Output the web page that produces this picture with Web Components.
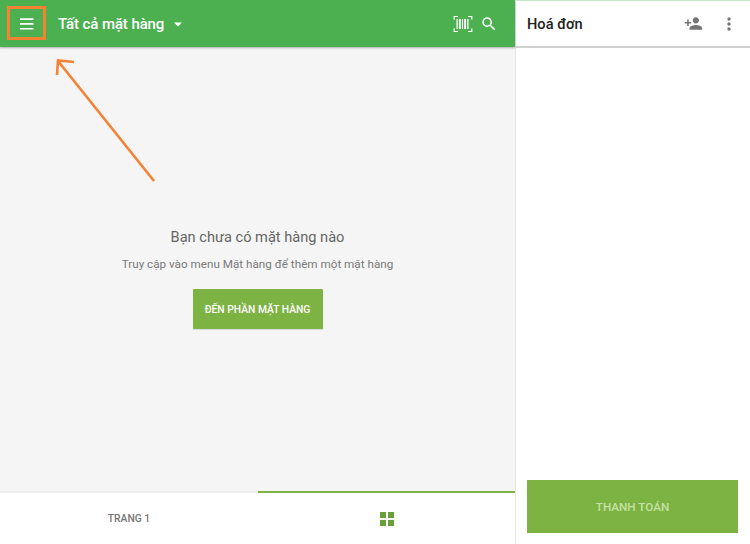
<!DOCTYPE html>
<html lang="vi">
<head>
<meta charset="utf-8">
<title>Bán hàng</title>
<style>
  html, body { margin: 0; height: 100%; }
  body { font-family: Roboto, "Liberation Sans", sans-serif; overflow: hidden; background: #fff; }
</style>
</head>
<body>
<pos-app>
  <items-panel slot="left"></items-panel>
  <bill-panel slot="right"></bill-panel>
  <pointer-note slot="note"></pointer-note>
</pos-app>

<script>
class PosApp extends HTMLElement {
  constructor() {
    super();
    this.attachShadow({ mode: 'open' }).innerHTML = `
      <style>
        :host { display: grid; grid-template-columns: 515px 235px; width: 750px; height: 544px; position: relative; }
        ::slotted([slot=note]) { position: absolute; left: 0; top: 0; }
      </style>
      <slot name="left"></slot>
      <slot name="right"></slot>
      <slot name="note"></slot>
    `;
  }
}

class ItemsPanel extends HTMLElement {
  constructor() {
    super();
    this.attachShadow({ mode: 'open' }).innerHTML = `
      <style>
        :host { display: flex; flex-direction: column; height: 544px; background: #f5f5f5; }
        .top {
          height: 47px; background: #4caf50; color: #fff; display: flex; align-items: center;
          box-shadow: 0 1px 2px rgba(0,0,0,.3); position: relative; padding-left: 15px;
        }
        .title { font-size: 15px; font-weight: 500; margin-left: 19px; padding-top: 1px; letter-spacing: -.1px; }
        .top svg { display: block; fill: #fff; }
        .caret { margin-left: 7px; }
        .grow { flex: 1; }
        .scan { margin-right: 7px; }
        .search { margin-right: 17px; }
        .empty { flex: 1; display: flex; flex-direction: column; align-items: center; padding-top: 180px; }
        .empty h2 { margin: 0; font-size: 14.6px; line-height: 20px; font-weight: 400; color: #666; }
        .empty p { margin: 9px 0 0; font-size: 11.7px; line-height: 16px; color: #7a7a7a; }
        .go {
          margin-top: 17px; width: 130px; height: 40px; display: flex; align-items: center; justify-content: center;
          background: #7cb342; color: #fff; font-size: 10.3px; font-weight: 500; border-radius: 1px;
          box-shadow: 0 1px 1px rgba(0,0,0,.12);
        }
        .tabs { height: 53px; display: grid; grid-template-columns: 258px 257px; background: #fff; }
        .tab { display: flex; align-items: center; justify-content: center; border-top: 2px solid #eeeeee; }
        .tab.on { border-top-color: #7cb342; }
        .tab span { font-size: 10.3px; font-weight: 500; color: #757575; }
        .tiles { display: grid; grid-template-columns: 6px 6px; grid-auto-rows: 6px; gap: 2px; }
        .tiles i { background: #689f38; }
      </style>
      <div class="top">
        <svg width="24" height="24" viewBox="0 0 24 24"><path d="M5 6.3h13.500v1.700H5zM5 11.100h13.500v1.700H5zM5 15.900h13.500v1.700H5z"/></svg>
        <span class="title">Tất cả mặt hàng</span>
        <svg class="caret" width="14" height="14" viewBox="0 0 14 14"><path d="M3 5.500h8L7 9.500z"/></svg>
        <span class="grow"></span>
        <svg class="scan" width="20" height="18" viewBox="0 0 20 18">
          <path fill="none" stroke="#fff" stroke-width="1.200" d="M5 1.500H1.200v3.300M15 1.500h3.800v3.300M5 16.500H1.200v-3.300M15 16.500h3.800v-3.300"/>
          <path d="M3.500 4h1.300v10H3.500zM6 4h1.800v10H6zM9 4h1v10H9zM11.200 4H13v10h-1.800zM14.200 4h1.300v10h-1.300z"/>
        </svg>
        <svg class="search" width="18" height="18" viewBox="0 0 24 24"><path d="M15.500 14h-.79l-.28-.27A6.470 6.470 0 0 0 16 9.500 6.500 6.500 0 1 0 9.500 16c1.610 0 3.090-.59 4.230-1.570l.27.28v.79l5 4.990L20.490 19l-4.990-5zm-6 0C7.010 14 5 11.990 5 9.500S7.010 5 9.500 5 14 7.010 14 9.500 11.990 14 9.500 14z"/></svg>
      </div>
      <div class="empty">
        <h2>Bạn chưa có mặt hàng nào</h2>
        <p>Truy cập vào menu Mặt hàng để thêm một mặt hàng</p>
        <div class="go">ĐẾN PHẦN MẶT HÀNG</div>
      </div>
      <div class="tabs">
        <div class="tab"><span>TRANG 1</span></div>
        <div class="tab on"><div class="tiles"><i></i><i></i><i></i><i></i></div></div>
      </div>
    `;
  }
}

class BillPanel extends HTMLElement {
  constructor() {
    super();
    this.attachShadow({ mode: 'open' }).innerHTML = `
      <style>
        :host { display: flex; flex-direction: column; height: 544px; background: #fff; border-left: 1px solid #e8e8e8; box-sizing: border-box; }
        .top {
          height: 48px; box-sizing: border-box; border-top: 1px solid #c8e6c9; border-bottom: 2px solid #d0d0d0;
          display: flex; align-items: center; padding-left: 11px; position: relative;
        }
        .title { font-size: 14.6px; font-weight: 500; color: #212121; flex: 1; padding-top: 1px; }
        .top svg { display: block; fill: #757575; }
        .add { margin-right: 16px; }
        .more { margin-right: 11px; }
        .body { flex: 1; }
        .pay {
          margin: 0 12px 11px 11px; height: 53px; display: flex; align-items: center; justify-content: center;
          background: #7cb342; color: #c5e1a5; font-size: 11.7px; font-weight: 500;
        }
      </style>
      <div class="top">
        <span class="title">Hoá đơn</span>
        <svg class="add" width="19" height="19" viewBox="0 0 24 24"><path d="M15 12c2.210 0 4-1.790 4-4s-1.790-4-4-4-4 1.790-4 4 1.790 4 4 4zm-9-2V7H4v3H1v2h3v3h2v-3h3v-2H6zm9 4c-2.670 0-8 1.340-8 4v2h16v-2c0-2.660-5.330-4-8-4z"/></svg>
        <svg class="more" width="20" height="20" viewBox="0 0 24 24"><path d="M12 8c1.100 0 2-.9 2-2s-.9-2-2-2-2 .9-2 2 .9 2 2 2zm0 2c-1.100 0-2 .9-2 2s.9 2 2 2 2-.9 2-2-.9-2-2-2zm0 6c-1.100 0-2 .9-2 2s.9 2 2 2 2-.9 2-2-.9-2-2-2z"/></svg>
      </div>
      <div class="body"></div>
      <div class="pay">THANH TOÁN</div>
    `;
  }
}

// orange annotation drawn on top of the screenshot
class PointerNote extends HTMLElement {
  constructor() {
    super();
    this.attachShadow({ mode: 'open' }).innerHTML = `
      <style>
        :host { display: block; width: 750px; height: 544px; pointer-events: none; }
        svg { display: block; }
      </style>
      <svg width="750" height="544" fill="none" stroke="#f58233">
        <rect x="8.500" y="7.500" width="36" height="31" stroke-width="3"/>
        <path stroke-width="2.600" d="M154 181L58 61M57 75L58 60.500L74 62"/>
      </svg>
    `;
  }
}

customElements.define('pos-app', PosApp);
customElements.define('items-panel', ItemsPanel);
customElements.define('bill-panel', BillPanel);
customElements.define('pointer-note', PointerNote);
</script>
</body>
</html>
